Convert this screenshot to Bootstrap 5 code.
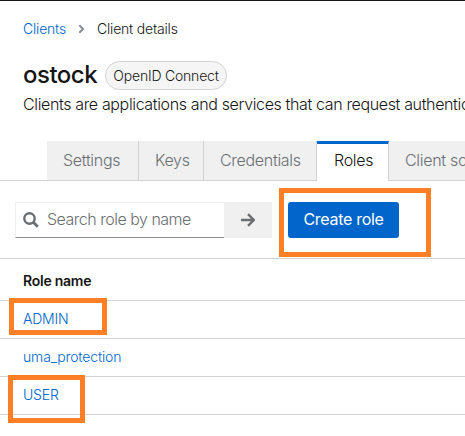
<!DOCTYPE html>
<html lang="en">
<head>
<meta charset="utf-8">
<meta name="viewport" content="width=device-width, initial-scale=1">
<title>Client details</title>
<link href="https://cdn.jsdelivr.net/npm/bootstrap@5.3.0/dist/css/bootstrap.min.css" rel="stylesheet">
<style>
body{font-family:Inter,"Open Sans",sans-serif;font-size:14px;line-height:21px;font-weight:350;letter-spacing:-.2px;color:#151515;background:#fff;height:436px;overflow:hidden}
a{color:#06c;text-decoration:none}
.page{height:436px;border-top:1px solid #151515;overflow:hidden}
.crumbs{height:21px;margin:17px 0 0 23px}
.crumbs a{width:44px}
.crumbs svg{margin:1px 12px 0 11px}
.heading{height:30px;margin:21px 0 0 23px}
.heading h1{font-size:24px;line-height:29px;font-weight:450;width:82px;letter-spacing:-.5px}
.protocol{height:29px;width:122px;margin-top:1px;border:1px solid #d2d2d2;border-radius:15px;background:#f5f5f5;letter-spacing:-.2px}
.about{font-size:16px;line-height:24px;margin:2px 0 0 23px;letter-spacing:-.36px}
.client-tabs{height:40px;margin-top:25px;box-shadow:inset 0 -1px #d2d2d2;padding-left:47px;font-size:16px;letter-spacing:-.3px}
.client-tabs .nav-link{height:40px;padding:0 0 0 16px;line-height:38px;border-radius:0;background:#f0f0f0;color:#6a6e73;border:0;border-right:1px solid #d2d2d2;border-bottom:1px solid #d2d2d2;flex:none}
.client-tabs .nav-link.active{background:#fff;color:#151515;border-top:3px solid #06c;border-bottom:0;line-height:33px}
.w-set{width:92px}.w-key{width:65px}.w-cred{width:113px}.w-role{width:72px}.client-tabs .w-role{padding-left:17px}.w-scope{width:150px}
.tools{height:77px;padding:21px 0 0 15px;font-size:16px}
.search{width:209px;height:36px;border:1px solid #f0f0f0;border-bottom-color:#8a8d90;border-right:0;padding-left:7px;color:#6a6e73;letter-spacing:-.5px}
.search svg{margin-right:8px}
.search .t,.create .t{padding-bottom:2px}
.go{width:48px;height:36px;background:#f0f0f0;border:0;border-radius:0;padding:0}
.create,.create:hover{width:111px;height:36px;margin-left:16px;background:#06c;color:#fff;border:0;border-radius:3px;padding:0;font-size:16px;letter-spacing:-.3px}
.roles{border-top:1px solid #d2d2d2}
.roles>div{height:38px;padding-left:23px;border-bottom:1px solid #d2d2d2;line-height:36px}
.roles>.head{height:42px;font-weight:600;line-height:44px;letter-spacing:-.25px}
.roles .long{letter-spacing:-.15px}
.t{display:inline-block;white-space:nowrap}
.callout{position:absolute;border:5px solid #ff7f27;pointer-events:none}
.on-create{left:279px;top:188px;width:152px;height:69px}
.on-admin{left:9px;top:298px;width:98px;height:37px}
.on-user{left:8px;top:375px;width:77px;height:48px}
</style>
<script src="https://cdn.jsdelivr.net/npm/bootstrap@5.3.0/dist/js/bootstrap.bundle.min.js"></script>
</head>
<body>
<main class="page position-relative">
<nav class="crumbs d-flex align-items-center"><a href="#" class="t">Clients</a><svg width="7" height="10" viewBox="0 0 7 10"><path d="M1.3 1.3 5 5 1.3 8.7" fill="none" stroke="#8a8d90" stroke-width="2"/></svg><span class="t">Client details</span></nav>
<header class="heading d-flex"><h1 class="mb-0">ostock</h1><span class="protocol d-flex align-items-center justify-content-center"><span class="t">OpenID Connect</span></span></header>
<p class="about text-nowrap mb-0"><span class="t">Clients are applications and services that can request authentication</span></p>
<nav class="client-tabs nav flex-nowrap">
<a class="nav-link w-set" href="#"><span class="t">Settings</span></a><a class="nav-link w-key" href="#"><span class="t">Keys</span></a><a class="nav-link w-cred" href="#"><span class="t">Credentials</span></a><a class="nav-link active w-role" href="#"><span class="t">Roles</span></a><a class="nav-link w-scope" href="#"><span class="t">Client scopes</span></a>
</nav>
<section class="tools d-flex">
<div class="search d-flex align-items-center"><svg width="16" height="16" viewBox="0 0 16 16"><circle cx="6.5" cy="6.5" r="5.2" fill="none" stroke="#6a6e73" stroke-width="2.4"/><path d="m10.3 10.3 4.5 4.5" stroke="#6a6e73" stroke-width="2.8"/></svg><span class="t">Search role by name</span></div>
<button class="go btn d-flex align-items-center justify-content-center" aria-label="Search"><svg width="14" height="14" viewBox="0 0 14 14"><path d="M0 7h12.5M7 1.1 12.8 7 7 12.9" fill="none" stroke="#6a6e73" stroke-width="2.4"/></svg></button>
<button class="create btn"><span class="t">Create role</span></button>
</section>
<section class="roles">
<div class="head"><span class="t">Role name</span></div>
<div><a href="#" class="t">ADMIN</a></div>
<div><a href="#" class="t long">uma_protection</a></div>
<div><a href="#" class="t">USER</a></div>
</section>
</main>
<div class="callout on-create"></div><div class="callout on-admin"></div><div class="callout on-user"></div>
</body>
</html>
